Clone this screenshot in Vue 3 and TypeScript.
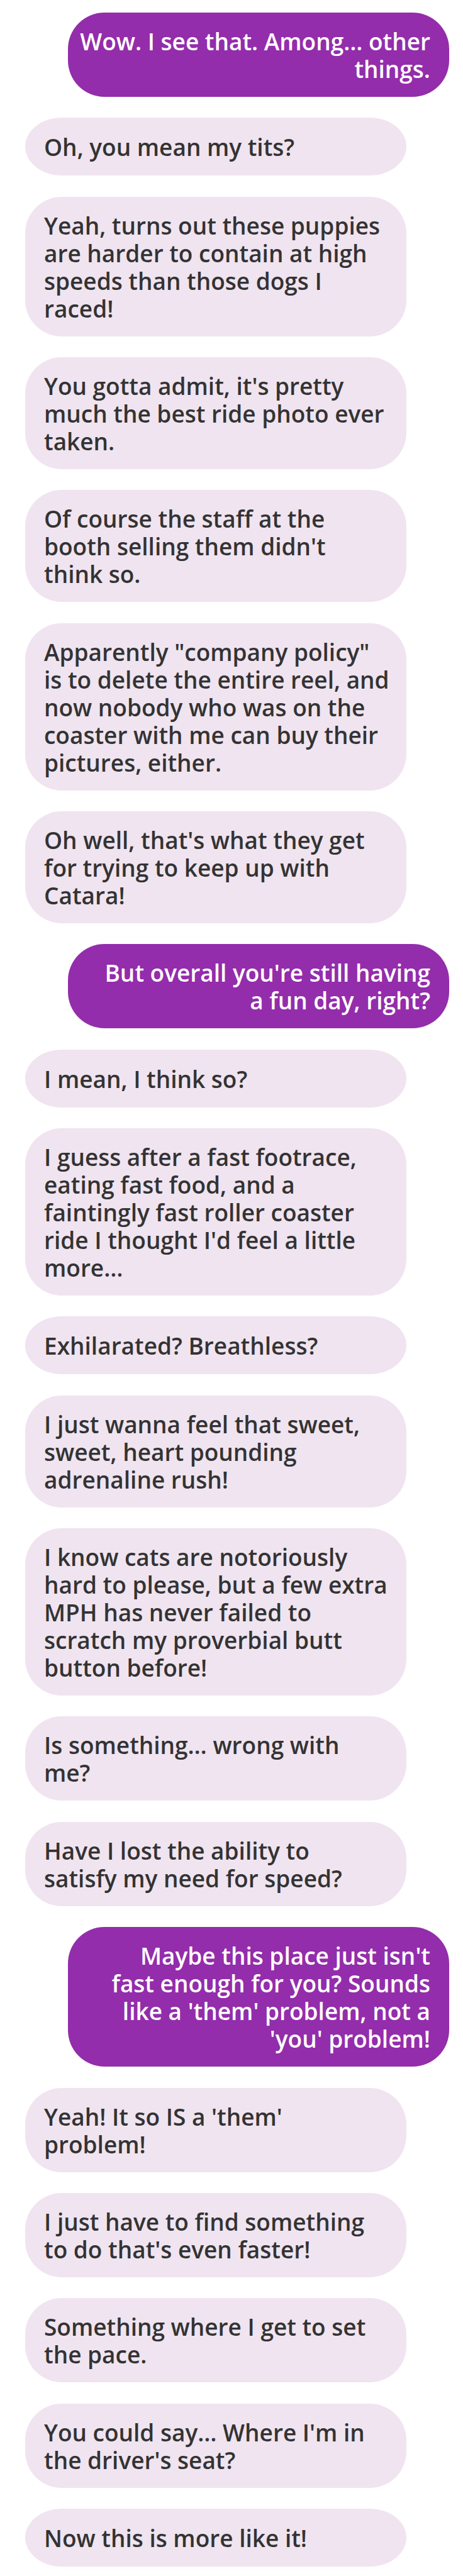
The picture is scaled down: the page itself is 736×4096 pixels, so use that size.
<script setup lang="ts">
type Message = { mine?: boolean; lines: string[] }

const messages: Message[] = [
  { mine: true, lines: ['Wow. I see that. Among… other', 'things.'] },
  { lines: ['Oh, you mean my tits?'] },
  { lines: ['Yeah, turns out these puppies', 'are harder to contain at high', 'speeds than those dogs I', 'raced!'] },
  { lines: ["You gotta admit, it's pretty", 'much the best ride photo ever', 'taken.'] },
  { lines: ['Of course the staff at the', "booth selling them didn't", 'think so.'] },
  { lines: ['Apparently "company policy"', 'is to delete the entire reel, and', 'now nobody who was on the', 'coaster with me can buy their', 'pictures, either.'] },
  { lines: ["Oh well, that's what they get", 'for trying to keep up with', 'Catara!'] },
  { mine: true, lines: ["But overall you're still having", 'a fun day, right?'] },
  { lines: ['I mean, I think so?'] },
  { lines: ['I guess after a fast footrace,', 'eating fast food, and a', 'faintingly fast roller coaster', "ride I thought I'd feel a little", 'more…'] },
  { lines: ['Exhilarated? Breathless?'] },
  { lines: ['I just wanna feel that sweet,', 'sweet, heart pounding', 'adrenaline rush!'] },
  { lines: ['I know cats are notoriously', 'hard to please, but a few extra', 'MPH has never failed to', 'scratch my proverbial butt', 'button before!'] },
  { lines: ['Is something… wrong with', 'me?'] },
  { lines: ['Have I lost the ability to', 'satisfy my need for speed?'] },
  { mine: true, lines: ["Maybe this place just isn't", 'fast enough for you? Sounds', "like a 'them' problem, not a", "'you' problem!"] },
  { lines: ["Yeah! It so IS a 'them'", 'problem!'] },
  { lines: ['I just have to find something', "to do that's even faster!"] },
  { lines: ['Something where I get to set', 'the pace.'] },
  { lines: ["You could say… Where I'm in", "the driver's seat?"] },
  { lines: ['Now this is more like it!'] },
]
</script>

<template>
  <main class="chat">
    <p
      v-for="(m, i) in messages"
      :key="i"
      class="bubble"
      :class="{ mine: m.mine, single: m.lines.length === 1 }"
    >
      <span v-for="line in m.lines" :key="line" class="line">{{ line }}</span>
    </p>
  </main>
</template>

<style>
body {
  margin: 0;
  background: #fff;
}
</style>

<style scoped>
.chat {
  box-sizing: border-box;
  min-height: 100vh;
  padding: 20px 22px 15px 40px;
  display: flex;
  flex-direction: column;
  justify-content: space-between;
}
.bubble {
  margin: 0 68px 0 0;
  padding: 24px 16px 22px 30px;
  border-radius: 58px;
  background: #f0e4f0;
  color: #333;
  font: 600 37px/44px "Open Sans", "Noto Sans", sans-serif;
}
.single {
  padding-top: 25px;
  padding-bottom: 23px;
  border-radius: 58px / 50%;
}
.mine {
  margin: 0 0 0 68px;
  padding-left: 16px;
  padding-right: 30px;
  background: #932dab;
  color: #fff;
  text-align: right;
}
.line {
  display: block;
  white-space: nowrap;
}
</style>
